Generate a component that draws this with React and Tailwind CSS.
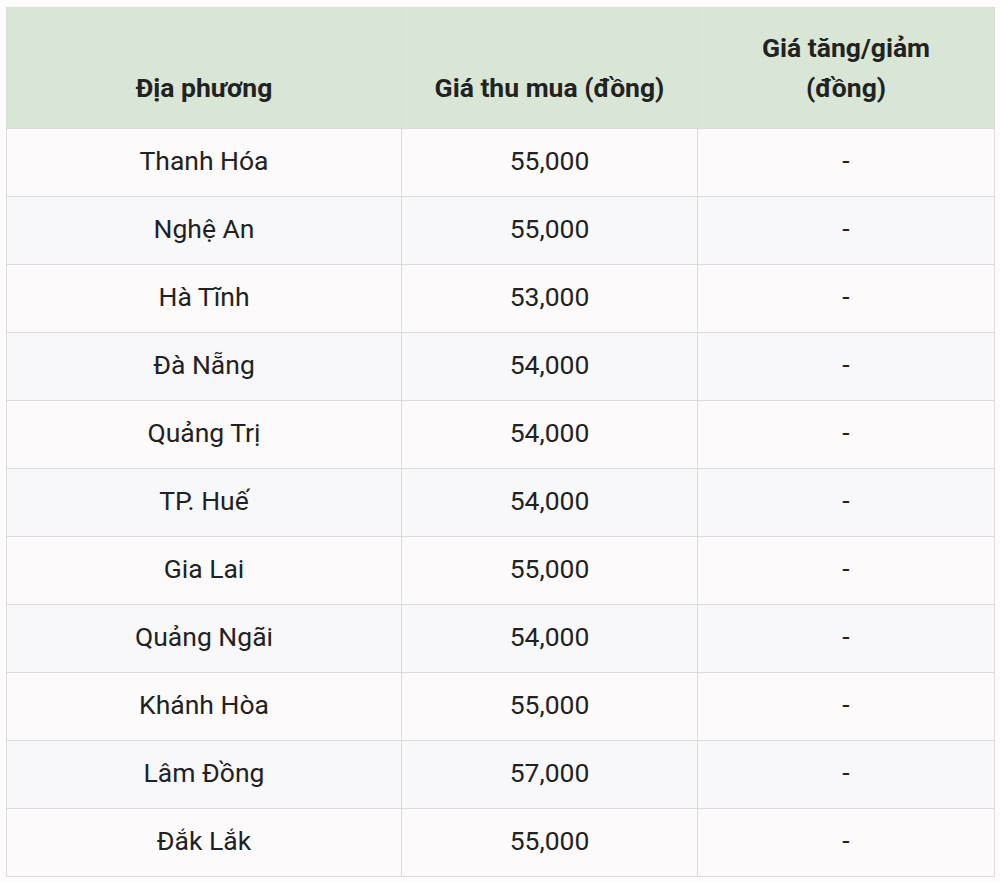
import React from "react";

const rows = [
  ["Thanh Hóa", "55,000", "-"],
  ["Nghệ An", "55,000", "-"],
  ["Hà Tĩnh", "53,000", "-"],
  ["Đà Nẵng", "54,000", "-"],
  ["Quảng Trị", "54,000", "-"],
  ["TP. Huế", "54,000", "-"],
  ["Gia Lai", "55,000", "-"],
  ["Quảng Ngãi", "54,000", "-"],
  ["Khánh Hòa", "55,000", "-"],
  ["Lâm Đồng", "57,000", "-"],
  ["Đắk Lắk", "55,000", "-"],
];

function App() {
  return (
    <div
      className="w-[1000px] h-[882px] bg-[#fdfbfb] pt-[7px] pl-[6px]"
      style={{ fontFamily: "Roboto, 'Noto Sans', sans-serif" }}
    >
      <table className="w-[988px] border-collapse table-fixed text-[#222] text-[26.5px]">
        <colgroup>
          <col className="w-[395px]" />
          <col className="w-[296px]" />
          <col className="w-[297px]" />
        </colgroup>
        <thead>
          <tr className="bg-[#d9e6d6] h-[121px]">
            <th className="border-x border-[#dcdcdc] align-bottom pb-[20px] font-bold text-[26.5px] leading-[40px]">
              Địa phương
            </th>
            <th className="border-x border-[#dcdcdc] align-bottom pb-[20px] font-bold text-[26.5px] leading-[40px]">
              Giá thu mua (đồng)
            </th>
            <th className="border-x border-[#dcdcdc] align-bottom pb-[20px] font-bold text-[26.5px] leading-[40px]">
              Giá tăng/giảm
              <br />
              (đồng)
            </th>
          </tr>
        </thead>
        <tbody>
          {rows.map((r, i) => (
            <tr
              key={r[0]}
              className={i % 2 === 0 ? "bg-[#fcfafa] h-[68px]" : "bg-[#f8f8fb] h-[68px]"}
            >
              {r.map((c, j) => (
                <td key={j} className="border border-[#dcdcdc] text-center align-middle pb-[2px]">
                  {c}
                </td>
              ))}
            </tr>
          ))}
        </tbody>
      </table>
    </div>
  );
}

export default App;
